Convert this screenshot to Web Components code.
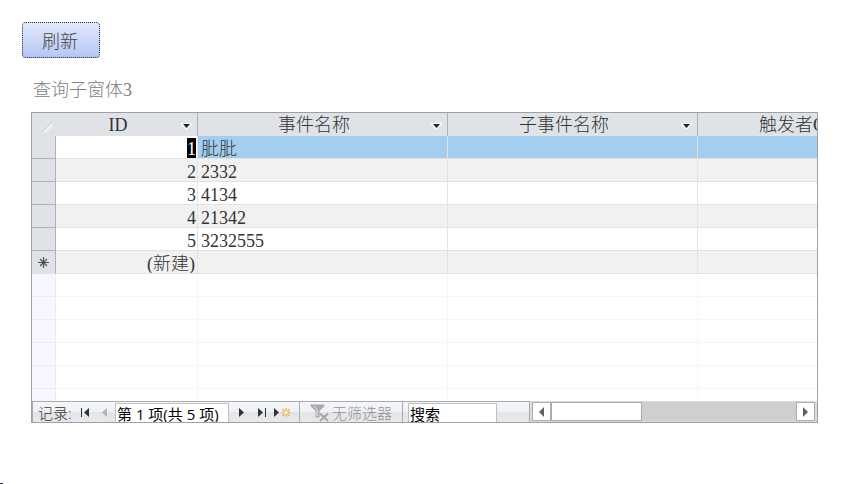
<!DOCTYPE html>
<html lang="zh-CN">
<head>
<meta charset="utf-8">
<title>查询子窗体3</title>
<style>
  body {
    margin: 0;
    background: #fff;
    font-family: "Liberation Serif", "Noto Sans CJK SC", serif;
    font-size: 18px;
    font-weight: 300;
    color: #333;
  }
</style>
</head>
<body>
<access-form>
  <command-button slot="command">刷新</command-button>
  <span slot="caption">查询子窗体3</span>
  <data-sheet></data-sheet>
  <record-navigator slot="footer"></record-navigator>
  <sheet-scrollbar slot="footer"></sheet-scrollbar>
</access-form>

<script>
class CommandButton extends HTMLElement {
  constructor() {
    super();
    this.attachShadow({ mode: 'open' });
    this.shadowRoot.innerHTML = `
      <style>
        :host { display: inline-block; }
        button {
          display: block;
          width: 78px;
          height: 36px;
          padding: 0 2px 0 0;
          border: 1px dotted #1c2848;
          border-radius: 4px;
          background: linear-gradient(#e4eafc, #b3c5f3) border-box;
          font: inherit;
          color: #444;
        }
      </style>
      <button type="button"><slot></slot></button>
    `;
  }
}

class AccessForm extends HTMLElement {
  constructor() {
    super();
    this.attachShadow({ mode: 'open' });
    this.shadowRoot.innerHTML = `
      <style>
        :host {
          position: relative;
          display: flex;
          flex-direction: column;
          box-sizing: border-box;
          height: 100vh;
          min-height: 300px;
          padding: 22px 48px 61px 22px;
        }
        .caption {
          margin: 18px 0 8px 11px;
          line-height: 28px;
          color: #808080;
        }
        .frame {
          flex: 1;
          min-height: 0;
          display: flex;
          flex-direction: column;
          margin-left: 9px;
          border: 1px solid #a0a0a3;
          overflow: hidden;
        }
        .body {
          flex: 1;
          min-height: 0;
          overflow: hidden;
        }
        .footer {
          display: flex;
          height: 21px;
          background: #dcdcdc;
          overflow: hidden;
        }
        .mark {
          position: absolute;
          left: 0;
          bottom: 0;
          width: 3px;
          height: 1px;
          background: linear-gradient(90deg, #c00 33%, #064 33% 66%, #04c 66%);
        }
      </style>
      <div><slot name="command"></slot></div>
      <div class="caption"><slot name="caption"></slot></div>
      <div class="frame">
        <div class="body"><slot></slot></div>
        <div class="footer"><slot name="footer"></slot></div>
      </div>
      <div class="mark"></div>
    `;
  }
}

class DataSheet extends HTMLElement {
  constructor() {
    super();
    this._rows = [
      ['1', '肶肶'],
      ['2', '2332'],
      ['3', '4134'],
      ['4', '21342'],
      ['5', '3232555'],
      ['(新建)', '']
    ];
    this._blankRows = 6;
    this.attachShadow({ mode: 'open' });
    this.shadowRoot.innerHTML = `
      <style>
        :host { display: block; }
        table {
          table-layout: fixed;
          width: 916px;
          border-collapse: separate;
          border-spacing: 0;
        }
        .sel { width: 24px; }
        .id { width: 142px; }
        .text { width: 250px; }
        th, td {
          box-sizing: border-box;
          height: 23px;
          padding: 0;
          line-height: 22px;
          white-space: nowrap;
          overflow: hidden;
        }
        thead th {
          background: #dfe3e8;
          border-right: 1px solid #aeb1b6;
          font-weight: inherit;
        }
        thead th:first-child { border-right-color: #dfe3e8; }
        .head {
          display: flex;
          align-items: center;
          padding-right: 4px;
        }
        .head span { flex: 1; }
        .head button {
          width: 13px;
          height: 14px;
          padding: 0;
          border: 0;
          background: none;
        }
        .clipped { padding-left: 61px; }
        .corner { display: block; margin: 4px 0 0 9px; }
        svg { display: block; }
        tbody th {
          background: #dfe3e8;
          border-right: 1px solid #aeb1b6;
          border-bottom: 1px solid #aeb1b6;
        }
        td {
          border-right: 1px solid #e3e3e3;
          border-bottom: 1px solid #e3e3e3;
          padding: 2px 0 0 3px;
          line-height: 20px;
        }
        td > span, mark { display: block; line-height: 22px; height: 20px; }
        td:nth-child(2) { padding: 2px 1px 0 0; text-align: right; }
        tr:nth-child(even) td { background: #f1f1f1; }
        tr.current td:nth-child(n+3) { background: #a4cef0; }
        mark {
          width: 9px;
          margin-left: auto;
          background: #000;
          color: #fff;
        }
        tr.new th { border-bottom-color: #dfe3e8; }
        tr.new td:nth-child(2) { padding-right: 2px; }
        tr.new svg { margin: 0 auto; }
        tr.blank th { background: #f6f7ff; border-color: #ebebf2; }
        tr.blank td { background: #fff; border-color: #f6f6f6; }
      </style>
      <table>
        <colgroup>
          <col class="sel"><col class="id"><col class="text"><col class="text"><col class="text">
        </colgroup>
        <thead>
          <tr>
            <th>
              <svg class="corner" width="13" height="12" viewBox="0 0 13 12">
                <defs><linearGradient id="g" x1="0.3" y1="0.3" x2="1" y2="1">
                  <stop offset="0.2" stop-color="#f8fafc"/><stop offset="1" stop-color="#d3d8e0"/>
                </linearGradient></defs>
                <path d="M0.5 11.5L11.5 0.5V11.5Z" fill="url(#g)"/>
                <path d="M0.5 11.5L11.5 0.5" stroke="#bccbdc" fill="none"/>
              </svg>
            </th>
            ${this._head('ID')}
            ${this._head('事件名称')}
            ${this._head('子事件名称')}
            <th scope="col" align="left"><span class="clipped">触发者Q</span></th>
          </tr>
        </thead>
        <tbody>${this._body()}</tbody>
      </table>
    `;
  }
  _head(title) {
    return `
      <th scope="col"><div class="head"><span>${title}</span>
        <button type="button" aria-label="${title}">
          <svg width="13" height="14" viewBox="0 0 13 14">
            <path d="M1 5H12V7L6.5 12L1 7Z" fill="#f7f8fa"/>
            <path d="M3 6H10L6.5 10Z" fill="#1d2430"/>
          </svg>
        </button></div></th>`;
  }
  _body() {
    let html = '';
    this._rows.forEach((row, i) => {
      const current = i === 0;
      const isNew = i === this._rows.length - 1;
      const star = `<svg width="13" height="13" viewBox="0 0 13 13">
        <path d="M6.5 1V12M1 6.5H12M3 3L10 10M10 3L3 10" stroke="#505050" stroke-width="1.2" fill="none"/></svg>`;
      html += `<tr class="${current ? 'current' : isNew ? 'new' : ''}">
        <th>${isNew ? star : ''}</th>
        <td>${current ? `<mark>${row[0]}</mark>` : `<span>${row[0]}</span>`}</td>
        <td><span>${row[1]}</span></td><td></td><td></td></tr>`;
    });
    for (let i = 0; i < this._blankRows; i++) {
      html += '<tr class="blank"><th></th><td></td><td></td><td></td><td></td></tr>';
    }
    return html;
  }
}

class RecordNavigator extends HTMLElement {
  constructor() {
    super();
    this.attachShadow({ mode: 'open' });
    this.shadowRoot.innerHTML = `
      <style>
        :host {
          flex: none;
          display: flex;
          box-sizing: border-box;
          width: 498px;
          border: 1px solid #a8abb0;
          border-bottom: 0;
          background: linear-gradient(#f5f6f8, #eff1f3 50%, #e2e5e9 50%, #e6e8ec);
          font-family: "Open Sans", "Noto Sans CJK SC", sans-serif;
          font-size: 15px;
          font-weight: 400;
          line-height: 22px;
          color: #555;
          white-space: nowrap;
          overflow: hidden;
        }
        .records { display: flex; width: 266px; padding-left: 5px; box-sizing: border-box; }
        label { flex: none; width: 37px; font-weight: 300; color: #333; }
        button {
          display: flex;
          align-items: center;
          justify-content: center;
          width: 20px;
          height: 22px;
          padding: 0;
          border: 0;
          background: none;
          font: inherit;
          color: inherit;
        }
        svg { display: block; flex: none; }
        input {
          box-sizing: border-box;
          height: 22px;
          margin: 1px 0 0;
          padding: 0 1px;
          border: 1px solid #bfbfbf;
          background: #fff;
          font: inherit;
          line-height: 22px;
          color: #000;
        }
        #record { width: 114px; margin-right: 3px; }
        .filter {
          width: 104px;
          gap: 3px;
          border: solid #a8abb0;
          border-width: 0 1px;
          box-sizing: border-box;
          color: #909090;
          font-weight: 300;
          line-height: 22px;
        }
        #search { width: 89px; margin-left: 5px; }
      </style>
      <div class="records">
        <label for="record">记录:</label>
        <button type="button" aria-label="第一条记录"><svg width="11" height="10" viewBox="0 0 11 10">
          <path d="M1 0H2V9H1ZM9 0V9L4 4.5Z" fill="#333"/></svg></button>
        <button type="button" aria-label="上一条记录"><svg width="8" height="10" viewBox="0 0 8 10">
          <path d="M6 0V9L1 4.5Z" fill="#b5b5b5"/></svg></button>
        <input id="record" value="第 1 项(共 5 项)">
        <button type="button" aria-label="下一条记录"><svg width="8" height="10" viewBox="0 0 8 10">
          <path d="M1 0V9L6 4.5Z" fill="#333"/></svg></button>
        <button type="button" aria-label="尾记录"><svg width="10" height="10" viewBox="0 0 10 10">
          <path d="M1 0V9L6 4.5ZM8 0H9V9H8Z" fill="#333"/></svg></button>
        <button type="button" aria-label="新记录"><svg width="18" height="10" viewBox="0 0 18 10">
          <path d="M1 0V9L6 4.5Z" fill="#333"/>
          <path d="M13 0V3M13 6V9M8.5 4.5H11M15 4.5H17.5M9.5 1L11.5 3M16.5 1L14.5 3M9.5 8L11.5 6M16.5 8L14.5 6" stroke="#eeb65c" stroke-width="1.4" fill="none"/>
          <circle cx="13" cy="4.5" r="2" stroke="#f2c77d" fill="#fff6e0"/></svg></button>
      </div>
      <button class="filter" type="button" disabled>
        <svg width="19" height="19" viewBox="0 0 19 19">
          <path d="M0.5 0.5H14.5V2L9.5 7V13.5H5.5V7L0.5 2Z" fill="#a9a9ab"/>
          <path d="M4 2L7 5.5V12" stroke="#f3f3f4" fill="none"/>
          <path d="M10 9.5L18 17M18 9.5L10 17" stroke="#a5a5a8" stroke-width="2" fill="none"/></svg>
        <span>无筛选器</span>
      </button>
      <input id="search" value="搜索" aria-label="搜索">
    `;
  }
}

class SheetScrollbar extends HTMLElement {
  constructor() {
    super();
    this.attachShadow({ mode: 'open' });
    this.shadowRoot.innerHTML = `
      <style>
        :host {
          flex: 1;
          display: flex;
          box-sizing: border-box;
          padding: 1px 2px;
          background: #dcdcdc;
        }
        button {
          flex: none;
          display: flex;
          align-items: center;
          justify-content: center;
          box-sizing: border-box;
          width: 19px;
          padding: 0;
          border: 1px solid #acacac;
          background: #fff;
        }
        .track { flex: 1; display: flex; background: #cfcfcf; }
        .thumb {
          box-sizing: border-box;
          width: 91px;
          border: 1px solid #acacac;
          background: #fff;
        }
      </style>
      <button type="button" aria-label="向左滚动"><svg width="6" height="10" viewBox="0 0 6 10">
        <path d="M5 0V10L0 5Z" fill="#606060"/></svg></button>
      <div class="track"><div class="thumb"></div></div>
      <button type="button" aria-label="向右滚动"><svg width="6" height="10" viewBox="0 0 6 10">
        <path d="M0 0V10L5 5Z" fill="#606060"/></svg></button>
    `;
  }
}

customElements.define('command-button', CommandButton);
customElements.define('access-form', AccessForm);
customElements.define('data-sheet', DataSheet);
customElements.define('record-navigator', RecordNavigator);
customElements.define('sheet-scrollbar', SheetScrollbar);
</script>
</body>
</html>
